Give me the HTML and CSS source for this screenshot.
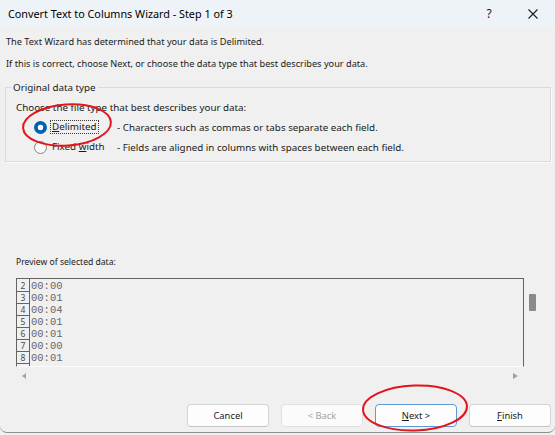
FILE: index.html
```html
<!DOCTYPE html>
<html lang="en">

<head>
    <meta charset="UTF-8">
    <title>Convert Text to Columns Wizard</title>
    <link rel="stylesheet" href="styles.css">
</head>

<body>
    <div class="window">
        <div class="titlebar">
            <span class="title">Convert Text to Columns Wizard - Step 1 of 3</span>
            <span class="tb-btn help">?</span>
            <span class="tb-btn close">
                <svg width="10" height="10" viewBox="0 0 10 10">
                    <path d="M0.5 0.5 L9.5 9.5 M9.5 0.5 L0.5 9.5" stroke="#1b1b1b" stroke-width="1.1" fill="none" />
                </svg>
            </span>
        </div>

        <div class="content">
            <p class="intro first">The Text Wizard has determined that your data is Delimited.</p>
            <p class="intro">If this is correct, choose Next, or choose the data type that best describes your data.</p>

            <fieldset class="group">
                <legend>Original data type</legend>
                <p class="choose">Choose the file type that best describes your data:</p>
                <div class="option">
                    <span class="radio checked"></span>
                    <span class="opt-name"><span class="focus"><u>D</u>elimited</span></span>
                    <span class="opt-desc">- Characters such as commas or tabs separate each field.</span>
                </div>
                <div class="option second">
                    <span class="radio"></span>
                    <span class="opt-name"><span class="nofocus">Fixed <u>w</u>idth</span></span>
                    <span class="opt-desc">- Fields are aligned in columns with spaces between each field.</span>
                </div>
            </fieldset>

            <div class="preview-label">Preview of selected data:</div>
            <div class="preview">
                <div class="preview-box">
                    <div class="row-nums">
                        <div class="num">2</div>
                        <div class="num">3</div>
                        <div class="num">4</div>
                        <div class="num">5</div>
                        <div class="num">6</div>
                        <div class="num">7</div>
                        <div class="num">8</div>
                    </div>
                    <div class="row-data">
                        <div>00:00</div>
                        <div>00:01</div>
                        <div>00:04</div>
                        <div>00:01</div>
                        <div>00:01</div>
                        <div>00:00</div>
                        <div>00:01</div>
                    </div>
                </div>
                <div class="vscroll">
                    <div class="thumb"></div>
                </div>
            </div>
            <div class="hscroll">
                <span class="arrow left"></span>
                <span class="arrow right"></span>
            </div>

            <div class="actions">
                <button class="btn">Cancel</button>
                <button class="btn" disabled>&lt; Back</button>
                <button class="btn default"><u>N</u>ext &gt;</button>
                <button class="btn"><u>F</u>inish</button>
            </div>
        </div>

        <!-- red marker circles -->
        <svg class="marks" width="555" height="435" viewBox="0 0 555 435">
            <ellipse cx="67" cy="125" rx="44" ry="20.5" transform="rotate(-4 67 125)" />
            <ellipse cx="415" cy="408" rx="52" ry="22.5" transform="rotate(-2 415 408)" />
        </svg>
    </div>
</body>

</html>
```

FILE: styles.css
```css
body {
    margin: 0;
    background: #f0f0f0;
    font-family: "Noto Sans", "Liberation Sans", sans-serif;
    color: #1a1a1a;
}

.window {
    position: relative;
    width: 555px;
    height: 432px;
    background: #f0f0f0;
    border-bottom: 1px solid #8e8e8e;
    border-radius: 0 0 7px 7px;
    display: flex;
    flex-direction: column;
}

.titlebar {
    height: 27px;
    flex: none;
    display: flex;
    align-items: center;
    background: #eef3f8;
}

.title {
    flex: 1;
    padding-left: 8px;
    font-size: 10.8px;
    color: #000;
}

.tb-btn {
    width: 44px;
    height: 27px;
    display: flex;
    align-items: center;
    justify-content: center;
}

.help {
    font-size: 12px;
    color: #1b1b1b;
}

.content {
    padding: 0 4px 0 5px;
    font-size: 9.2px;
}

.intro {
    margin: 6px 0 0 1px;
    line-height: 16px;
}

.intro.first {
    margin-top: 7px;
}

.group {
    margin: 8px 0 0 0;
    padding: 5px 10px 6px 10px;
    border: 1px solid #dadada;
    box-shadow: 1px 1px 0 #fbfbfb;
    min-width: 0;
    font-size: 9.8px;
}

.group legend {
    margin-left: -5px;
    padding: 0 2px;
    line-height: 15px;
}

.choose {
    margin: 0;
    line-height: 16px;
}

.option {
    display: flex;
    align-items: center;
    height: 16px;
    margin-top: 3px;
}

.option.second {
    margin-top: 4px;
}

.radio {
    width: 11px;
    height: 11px;
    margin-left: 18px;
    border: 1px solid #858585;
    border-radius: 50%;
    background: #f9f9f9;
    flex: none;
}

.radio.checked {
    width: 13px;
    height: 13px;
    border: none;
    background: radial-gradient(circle, #fff 0 2.6px, #005fb8 3.1px);
}

.opt-name {
    width: 67px;
    margin-left: 3px;
    flex: none;
}

.focus,
.nofocus {
    display: inline-block;
    padding: 0 1px;
    line-height: 12px;
    border: 1px dotted #3a3a3a;
}

.nofocus {
    border-color: transparent;
}

.opt-desc {
    white-space: nowrap;
}

.preview-label {
    margin: 92px 0 0 11px;
    line-height: 16px;
    font-size: 8.6px;
}

.preview {
    display: flex;
    margin: 8px 0 0 11px;
}

.preview-box {
    width: 506px;
    height: 87px;
    border: 1px solid #646464;
    border-bottom-color: #fcfcfc;
    display: flex;
}

.row-nums {
    width: 12px;
    border-right: 1px solid #646464;
    padding-top: 1px;
}

.num {
    height: 11px;
    border-bottom: 1px solid #646464;
    font-size: 8.5px;
    line-height: 11px;
    text-align: center;
    color: #4a4a4a;
}

.row-data {
    padding: 1px 0 0 1px;
    font-family: "Liberation Mono", monospace;
    font-size: 10.5px;
    line-height: 12px;
    color: #666;
}

.vscroll {
    width: 17px;
    padding: 16px 0 0 5px;
}

.thumb {
    width: 7px;
    height: 17px;
    border-radius: 1px;
    background: #8a8a8a;
}

.hscroll {
    width: 508px;
    height: 18px;
    margin-left: 11px;
    padding: 0 6px 0 6px;
    box-sizing: border-box;
    display: flex;
    justify-content: space-between;
    align-items: center;
}

.arrow {
    width: 0;
    height: 0;
    border-top: 3.5px solid transparent;
    border-bottom: 3.5px solid transparent;
}

.arrow.left {
    border-right: 4px solid #a3a3a3;
}

.arrow.right {
    border-left: 5px solid #a3a3a3;
}

.actions {
    display: flex;
    justify-content: flex-end;
    gap: 12px;
    margin-top: 19px;
}

.btn {
    width: 82px;
    height: 23px;
    padding: 0;
    background: #fdfdfd;
    border: 1px solid #d4d4d4;
    border-bottom-color: #c2c2c2;
    border-radius: 4px;
    font-family: "Noto Sans", "Liberation Sans", sans-serif;
    font-size: 9.4px;
    color: #1a1a1a;
}

.btn:disabled {
    color: #a2a2a2;
    background: #fbfbfb;
    border-color: #e0e0e0;
}

.btn.default {
    border-color: #5e9ad8;
}

.marks {
    position: absolute;
    top: 0;
    left: 0;
    pointer-events: none;
    overflow: visible;
}

.marks ellipse {
    fill: none;
    stroke: #e3151c;
    stroke-width: 2;
}
```
